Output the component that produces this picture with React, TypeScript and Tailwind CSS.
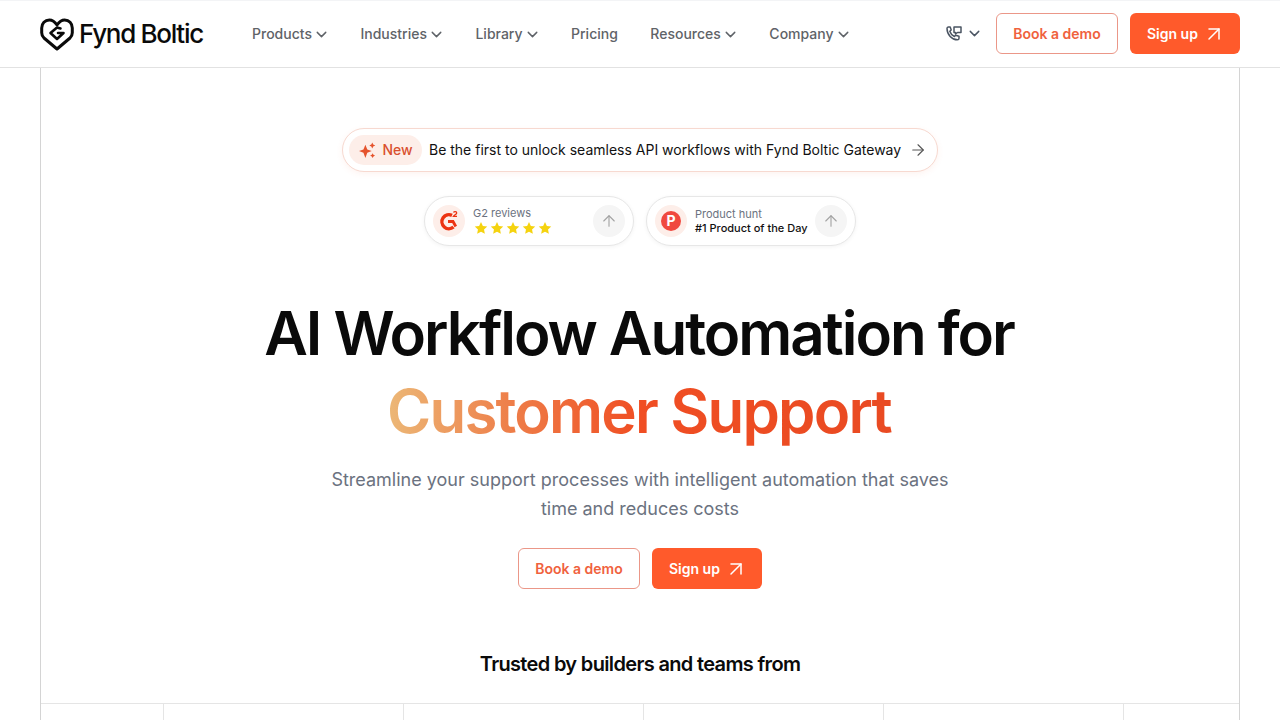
import { ArrowRight, ArrowUp, ArrowUpRight, ChevronDown } from "lucide-react";

const navItems = [
  { label: "Products", caret: true },
  { label: "Industries", caret: true },
  { label: "Library", caret: true },
  { label: "Pricing", caret: false },
  { label: "Resources", caret: true },
  { label: "Company", caret: true },
];

const Logo = () => (
  <div className="flex w-[164px] items-center gap-[5px]">
    <svg width="34" height="33" viewBox="0 0 34 33" fill="none" stroke="#0a0a0a" strokeLinejoin="round" strokeLinecap="round">
      <path strokeWidth="3" d="M17 31 4 20C2.500 18.600 1.700 16.800 1.700 14.800V10C1.700 5.500 5 2 9.300 2 12.500 2 15 4 17 7 19 4 21.500 2 24.700 2 29 2 32.300 5.500 32.300 10v4.800c0 2-.8 3.800-2.300 5.200z" />
      <path strokeWidth="2.600" d="M20.500 10.500 17 9.500l-6.500 5.500 6.500 6 6.500-6H18" />
    </svg>
    <span className="mb-px whitespace-nowrap text-[26px] font-medium leading-none tracking-[-1.3px] text-[#0a0a0a]">Fynd Boltic</span>
  </div>
);

const BookDemo = () => (
  <button className="flex h-[41px] w-[122px] items-center justify-center rounded-md border border-[#eb9788] bg-white text-sm font-semibold text-[#f0623d]">
    Book a demo
  </button>
);

const SignUp = () => (
  <button className="flex h-[41px] w-[110px] items-center gap-1 rounded-md bg-[#ff5a2b] pl-[17px] text-sm font-semibold text-white">
    Sign up
    <ArrowUpRight className="size-6" strokeWidth={1.5} />
  </button>
);

const Header = () => (
  <header className="flex h-[68px] items-center border-t border-b border-t-[#f3f4f6] border-b-[#e2e2e2] bg-white pl-10 pr-10">
    <Logo />
    <nav className="ml-12 flex items-center gap-[30.5px]">
      {navItems.map((item) => (
        <div key={item.label} className={item.caret ? "flex items-center text-sm font-medium text-[#5f6368]" : "flex items-center pr-[2px] text-sm font-medium text-[#5f6368]"}>
          {item.label}
          {item.caret && <ChevronDown className="ml-px size-[17px]" strokeWidth={2} />}
        </div>
      ))}
    </nav>
    <div className="mb-px ml-auto flex items-center">
      <svg width="18" height="18" viewBox="0 0 18 18" fill="none" stroke="#4b5563" strokeWidth="1.500" strokeLinejoin="round" strokeLinecap="round">
        <path d="M2 3.500c0-.8.6-1.500 1.400-1.500h1.800l1 3-1.400 1.200c.7 2.300 2.400 4.200 4.600 5.300l1.300-1.300 3.300 1.100v1.900c0 .9-.7 1.600-1.600 1.600C6.900 14.800 2 9.600 2 3.500z" />
        <path d="M9 2h7v5.500h-3.500L10.500 9V7.500H9z" />
      </svg>
      <ChevronDown className="ml-[3px] size-[17px] text-[#4b5563]" strokeWidth={2} />
      <div className="ml-[13px] mr-3"><BookDemo /></div>
      <SignUp />
    </div>
  </header>
);

const Stars = () => (
  <div className="ml-px mt-[1px] flex gap-[2px]">
    {[0, 1, 2, 3, 4].map((i) => (
      <svg key={i} width="14" height="14" viewBox="0 0 24 24" fill="#f5d30f">
        <path d="m12 1.500 3.200 6.900 7.500.9-5.500 5.200 1.400 7.500L12 18.300 5.400 22l1.400-7.500L1.300 9.300l7.500-.9z" />
      </svg>
    ))}
  </div>
);

const UpCircle = () => (
  <div className="flex size-8 shrink-0 items-center justify-center rounded-full bg-[#f5f5f5]">
    <ArrowUp className="size-[18px] text-[#a3a3a3]" strokeWidth={1.5} />
  </div>
);

const Reviews = () => (
  <div className="mt-6 flex justify-center gap-3 text-left">
    <div className="flex h-[50px] w-[210px] items-center rounded-full border border-[#e7e7e7] bg-white pl-2 pr-[8px] shadow-[0_1px_4px_rgba(0,0,0,0.05)]">
      <div className="flex size-8 shrink-0 items-center justify-center rounded-full bg-[#fdeee9]">
        <svg width="22" height="22" viewBox="0 0 22 22" fill="none">
          <path d="M14 5.400A7 7 0 1 0 15.500 17" stroke="#ec3312" strokeWidth="3.400" />
          <path d="M10 11.500h5l2.800 5" stroke="#ec3312" strokeWidth="2.800" />
          <path d="M15.500 2.500c.6-1.300 3.200-1.200 3.200.4 0 1.300-2.400 2-3.300 3.400h3.600" stroke="#ec3312" strokeWidth="1.300" />
        </svg>
      </div>
      <div className="mb-px ml-2 flex-1">
        <div className="text-[11px] leading-[14px] text-[#6b7280]">G2 reviews</div>
        <Stars />
      </div>
      <UpCircle />
    </div>
    <div className="flex h-[50px] w-[210px] items-center rounded-full border border-[#e7e7e7] bg-white pl-2 pr-[8px] shadow-[0_1px_4px_rgba(0,0,0,0.05)]">
      <div className="flex size-8 shrink-0 items-center justify-center rounded-full bg-[#fdeee9]">
        <div className="flex size-5 items-center justify-center rounded-full bg-[#f0483e] text-sm font-bold text-white">P</div>
      </div>
      <div className="ml-2 flex-1">
        <div className="text-[11px] leading-[14px] text-[#6b7280]">Product hunt</div>
        <div className="whitespace-nowrap text-[11px] font-medium leading-[14px] text-[#111]">#1 Product of the Day</div>
      </div>
      <UpCircle />
    </div>
  </div>
);

export default function App() {
  return (
    <div className="h-[720px] overflow-hidden bg-white font-['Inter',sans-serif]">
      <Header />
      <main className="mx-10 h-[652px] border-x border-[#d4d4d4] pt-[60px] text-center">
        <div className="flex justify-center">
          <div className="flex h-[44px] w-[596px] items-center rounded-full border border-[#f7d9d0] bg-white pl-[6px] shadow-[0_2px_6px_rgba(240,98,61,0.08)]">
            <div className="flex h-[30px] w-[73px] items-center justify-center gap-[6px] rounded-full bg-[#fdeee9] pl-[1px] text-sm font-medium text-[#d9502e]">
              <svg width="17" height="17" viewBox="0 0 16 16" fill="#e5532d">
                <path d="M6 2.500 7.800 7l4.200 1.500-4.200 1.600L6 15l-1.800-4.900L0 8.500 4.200 7z" />
                <path d="M12.500.5l.9 1.900 1.900.9-1.900.9-.9 1.900-.9-1.900-1.900-.9 1.900-.9zM12.800 10.500l.8 1.500 1.500.8-1.500.8-.8 1.500-.8-1.500-1.500-.8 1.500-.8z" />
              </svg>
              New
            </div>
            <span className="ml-[7px] whitespace-nowrap text-sm text-[#111]">Be the first to unlock seamless API workflows with Fynd Boltic Gateway</span>
            <ArrowRight className="ml-2 size-[18px] text-[#555]" strokeWidth={1.5} />
          </div>
        </div>
        <Reviews />
        <h1 className="mt-[48px] text-[60px] font-semibold leading-[78px] tracking-[-1.8px] text-[#0a0a0a]">
          <span className="pr-[2px] tracking-[-2.04px]">AI Workflow Automation for</span>
          <br />
          <span className="bg-[linear-gradient(90deg,#ecb877_0%,#ee7d48_25%,#f04e23_50%,#e94a22_100%)] bg-clip-text pr-[2px] text-transparent">Customer Support</span>
        </h1>
        <p className="mx-auto mt-[15px] w-[640px] text-lg leading-[29px] text-[#6b7280]">
          Streamline your support processes with intelligent automation that saves time and reduces costs
        </p>
        <div className="mt-[25px] flex justify-center gap-3">
          <BookDemo />
          <SignUp />
        </div>
        <h2 className="mt-[61px] text-xl font-semibold leading-[28px] tracking-[-0.66px] text-[#0a0a0a]">Trusted by builders and teams from</h2>
        <div className="mt-[25px] grid grid-cols-[123px_240px_240px_240px_240px_1fr] border-t border-[#e5e5e5]">
          {[0, 1, 2, 3, 4, 5].map((i) => (
            <div key={i} className="h-12 border-r border-[#e5e5e5] last:border-r-0" />
          ))}
        </div>
      </main>
    </div>
  );
}
